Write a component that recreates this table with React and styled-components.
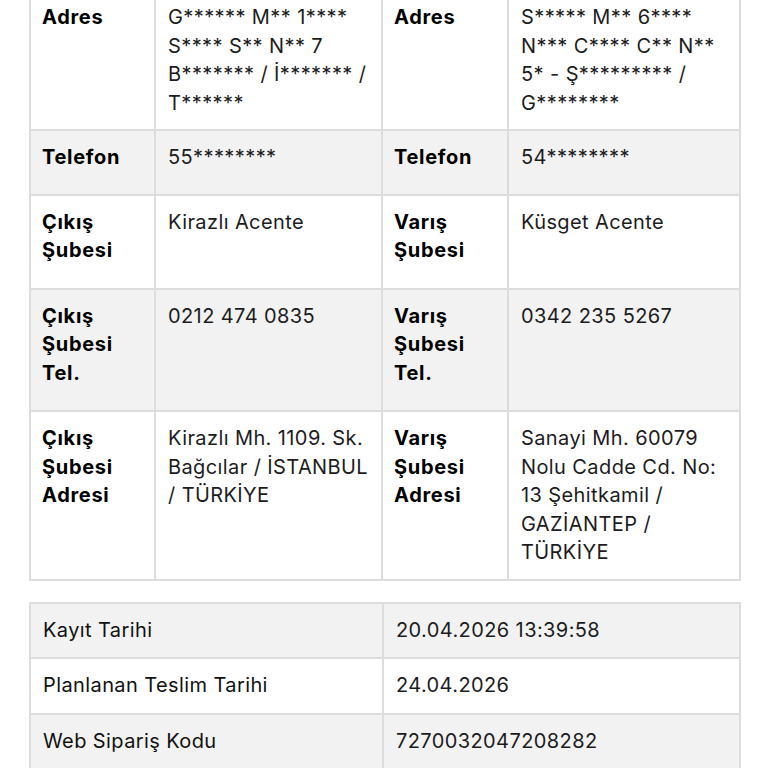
import React from 'react';
import styled, { createGlobalStyle } from 'styled-components';

const Global = createGlobalStyle`
  html, body { margin: 0; padding: 0; background: #ffffff; }
  body {
    font-family: Inter, "Noto Sans", "Liberation Sans", sans-serif;
    -webkit-font-smoothing: antialiased;
    color: #1c1c1e;
  }
`;

const Page = styled.main`
  display: flex;
  flex-direction: column;
  gap: 21px;
  padding: 0 27px 40px 29px;
  margin-top: -9px;
`;

const Table = styled.section`
  display: flex;
  flex-direction: column;
  gap: 2px;
  padding: 2px;
  background: #dddddd;
`;

const Cell = styled.div`
  font-size: 20px;
  line-height: 28.5px;
  white-space: nowrap;
  letter-spacing: ${p => (p.$label ? '0.7px' : '0.4px')};
  padding: ${p => p.$pt}px 8px ${p => p.$pb}px ${p => (p.$label ? 11 : 12)}px;
  font-weight: ${p => (p.$label ? 700 : 400)};
  color: ${p => (p.$label ? '#000000' : '#1c1c1e')};
`;

const Row = styled.div`
  display: grid;
  grid-template-columns: ${p => p.$cols};
  gap: 2px;
  & > ${Cell} {
    background: ${p => (p.$alt ? '#f2f2f2' : '#ffffff')};
  }
`;

const InfoLabel = styled(Cell)`
  font-weight: 400;
  letter-spacing: 0.4px;
  color: #111111;
`;

const partyCols = '123px 225px 124px 230px';
const metaCols = '351px 355px';

const partyRows = [
  {
    l1: ['Adres'],
    v1: ['G****** M** 1****', 'S**** S** N** 7', 'B******* / İ******* /', 'T******'],
    l2: ['Adres'],
    v2: ['S***** M** 6****', 'N*** C**** C** N**', '5* - Ş********* /', 'G********'],
    pt: 10,
    pb: 12,
  },
  {
    l1: ['Telefon'],
    v1: ['55********'],
    l2: ['Telefon'],
    v2: ['54********'],
    pt: 12,
    pb: 22,
  },
  {
    l1: ['Çıkış', 'Şubesi'],
    v1: ['Kirazlı Acente'],
    l2: ['Varış', 'Şubesi'],
    v2: ['Küsget Acente'],
    pt: 12,
    pb: 23,
  },
  {
    l1: ['Çıkış', 'Şubesi', 'Tel.'],
    v1: ['0212 474 0835'],
    l2: ['Varış', 'Şubesi', 'Tel.'],
    v2: ['0342 235 5267'],
    pt: 12,
    pb: 23,
  },
  {
    l1: ['Çıkış', 'Şubesi', 'Adresi'],
    v1: ['Kirazlı Mh. 1109. Sk.', 'Bağcılar / İSTANBUL', '/ TÜRKİYE'],
    l2: ['Varış', 'Şubesi', 'Adresi'],
    v2: ['Sanayi Mh. 60079', 'Nolu Cadde Cd. No:', '13 Şehitkamil /', 'GAZİANTEP /', 'TÜRKİYE'],
    pt: 12,
    pb: 12,
  },
];

const metaRows = [
  ['Kayıt Tarihi', '20.04.2026 13:39:58'],
  ['Planlanan Teslim Tarihi', '24.04.2026'],
  ['Web Sipariş Kodu', '7270032047208282'],
];

const Lines = ({ items }) =>
  items.map((t, i) => (
    <React.Fragment key={i}>
      {i > 0 && <br />}
      {t}
    </React.Fragment>
  ));

export default function App() {
  return (
    <>
      <Global />
      <Page>
        <Table>
          {partyRows.map((r, i) => (
            <Row key={i} $cols={partyCols} $alt={i % 2 === 1}>
              <Cell $label $pt={r.pt} $pb={r.pb}><Lines items={r.l1} /></Cell>
              <Cell $pt={r.pt} $pb={r.pb}><Lines items={r.v1} /></Cell>
              <Cell $label $pt={r.pt} $pb={r.pb}><Lines items={r.l2} /></Cell>
              <Cell $pt={r.pt} $pb={r.pb}><Lines items={r.v2} /></Cell>
            </Row>
          ))}
        </Table>
        <Table>
          {metaRows.map(([k, v], i) => (
            <Row key={k} $cols={metaCols} $alt={i % 2 === 0}>
              <InfoLabel $pt={12} $pb={13}>{k}</InfoLabel>
              <Cell $pt={12} $pb={13}>{v}</Cell>
            </Row>
          ))}
        </Table>
      </Page>
    </>
  );
}
